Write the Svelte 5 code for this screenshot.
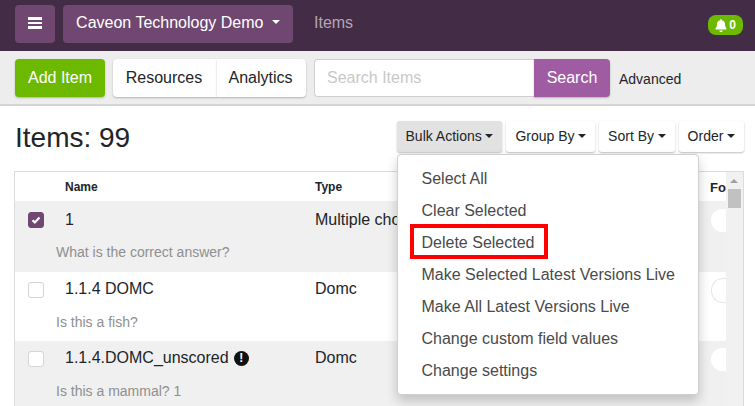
<script>
  let items = [
    { name: "1", type: "Multiple choice", stem: "What is the correct answer?", checked: true },
    { name: "1.1.4 DOMC", type: "Domc", stem: "Is this a fish?", outline: true },
    { name: "1.1.4.DOMC_unscored", type: "Domc", stem: "Is this a mammal? 1", warn: true }
  ];

  let menu = [
    "Select All",
    "Clear Selected",
    "Delete Selected",
    "Make Selected Latest Versions Live",
    "Make All Latest Versions Live",
    "Change custom field values",
    "Change settings"
  ];
</script>

<div class="page">
  <header class="topbar">
    <button class="btn-purple burger" aria-label="Menu">
      <span></span><span></span><span></span>
    </button>
    <button class="btn-purple org">Caveon Technology Demo <i class="caret big"></i></button>
    <span class="crumb">Items</span>
    <span class="bell">
      <svg width="12" height="13" viewBox="0 0 448 512"><path fill="#fff" d="M224 512c35 0 64-29 64-64H160c0 35 29 64 64 64zm215-150c-19-21-55-52-55-154 0-78-54-140-128-155V32a32 32 0 1 0-64 0v21C118 68 64 130 64 208c0 102-36 133-55 154-6 6-9 14-9 22 0 16 13 32 32 32h384c19 0 32-16 32-32 0-8-3-16-9-22z"/></svg>
      0
    </span>
  </header>

  <div class="toolbar">
    <button class="add">Add Item</button>
    <div class="pair">
      <button class="white">Resources</button>
      <button class="white">Analytics</button>
    </div>
    <div class="search">
      <input placeholder="Search Items" />
      <button>Search</button>
    </div>
    <span class="advanced">Advanced</span>
  </div>

  <div class="heading">
    <h1>Items: 99</h1>
    <div class="actions">
      <div class="bulk">
        <button class="small active">Bulk Actions<i class="caret"></i></button>
        <ul class="menu">
          {#each menu as m}
            <li class:flagged={m === "Delete Selected"}><span>{m}</span></li>
          {/each}
        </ul>
      </div>
      <button class="small">Group By<i class="caret"></i></button>
      <button class="small">Sort By<i class="caret"></i></button>
      <button class="small">Order<i class="caret"></i></button>
    </div>
  </div>

  <div class="table">
    <div class="rows">
      <div class="row head">
        <span class="c-name">Name</span>
        <span class="c-type">Type</span>
        <span class="c-fo">Fo</span>
      </div>
      {#each items as item, i}
        <div class="item" class:odd={i % 2 === 0} class:first={i === 0}>
          <div class="row main">
            <span class="check" class:on={item.checked}>
              {#if item.checked}
                <svg width="10" height="8" viewBox="0 0 10 8"><path d="M1.5 4.2 3.8 6.4 8.5 1.6" fill="none" stroke="#fff" stroke-width="2.2"/></svg>
              {/if}
            </span>
            <span class="c-name">{item.name}{#if item.warn}<span class="warn">!</span>{/if}</span>
            <span class="c-type">{item.type}</span>
            <span class="toggle" class:outline={item.outline}></span>
          </div>
          <div class="stem">{item.stem}</div>
        </div>
      {/each}
    </div>
    <div class="scrollbar">
      <span class="arrow"></span>
      <span class="thumb"></span>
    </div>
  </div>
</div>

<style>
  :global(body) {
    margin: 0;
    background: #fff;
    overflow: hidden;
  }
  .page {
    width: 755px;
    height: 406px;
    overflow: hidden;
    font-family: "Liberation Sans", Arial, sans-serif;
    color: #212529;
  }
  button {
    font-family: inherit;
    border: 0;
    cursor: pointer;
  }

  .topbar {
    height: 51px;
    background: #432c45;
    display: flex;
    align-items: flex-start;
    padding: 5px 15px 0;
    box-sizing: border-box;
  }
  .btn-purple {
    height: 38px;
    background: #6f4770;
    color: #fff;
    border-radius: 4px;
    font-size: 16px;
    padding: 0 0 2px;
  }
  .burger {
    width: 40px;
    margin-right: 8px;
    display: flex;
    flex-direction: column;
    align-items: center;
    justify-content: center;
    gap: 2px;
  }
  .burger span {
    width: 14px;
    height: 2.5px;
    background: #fff;
  }
  .org {
    width: 230px;
    margin-right: 21px;
  }
  .crumb {
    color: #b3a6b4;
    font-size: 16px;
    line-height: 36px;
  }
  .bell {
    margin-left: auto;
    margin-right: -3px;
    margin-top: 10px;
    background: #6cb900;
    color: #fff;
    font-size: 12px;
    font-weight: 700;
    height: 20px;
    width: 35px;
    border-radius: 8px;
    display: flex;
    align-items: center;
    justify-content: center;
    gap: 2px;
  }
  .caret {
    display: inline-block;
    border-top: 4px solid currentColor;
    border-left: 4px solid transparent;
    border-right: 4px solid transparent;
    margin-left: 3.6px;
    vertical-align: 3px;
  }
  .caret.big {
    margin-left: 4px;
    vertical-align: 4px;
  }

  .toolbar {
    height: 55px;
    box-sizing: border-box;
    background: #ededed;
    border-bottom: 2px solid #d5d5d5;
    padding: 8px 15px 0;
    display: flex;
    align-items: flex-start;
  }
  .add {
    width: 90px;
    height: 38px;
    background: #6cb900;
    color: #fff;
    font-size: 16px;
    border-radius: 4px;
    box-shadow: 0 1px 2px rgba(0, 0, 0, 0.25);
    margin-right: 8px;
  }
  .pair {
    display: flex;
    margin-right: 8px;
  }
  .white {
    height: 38px;
    background: #fff;
    color: #212529;
    font-size: 16px;
    border-radius: 4px;
    box-shadow: 0 1px 2px rgba(0, 0, 0, 0.25);
    padding: 0 2px 0 0;
  }
  .pair .white:first-child {
    width: 104px;
    border-radius: 4px 0 0 4px;
  }
  .pair .white:last-child {
    width: 89px;
    border-radius: 0 4px 4px 0;
  }
  .search {
    display: flex;
    width: 316px;
  }
  .search input {
    width: 220px;
    height: 38px;
    box-sizing: border-box;
    border: 1px solid #cfcfcf;
    border-right: 0;
    border-radius: 4px 0 0 4px;
    padding: 0 12px;
    font: 16px "Liberation Sans", Arial, sans-serif;
    outline: none;
  }
  .search input::placeholder {
    color: #c9c9c9;
    opacity: 1;
  }
  .search button {
    width: 76px;
    height: 38px;
    background: #a05ca2;
    color: #fff;
    font-size: 16px;
    border-radius: 0 4px 4px 0;
    box-shadow: 0 1px 2px rgba(0, 0, 0, 0.25);
  }
  .advanced {
    font-size: 14px;
    margin-left: -11px;
    line-height: 40px;
  }

  .heading {
    height: 65px;
    box-sizing: border-box;
    padding: 0 11px 0 15px;
    display: flex;
    justify-content: space-between;
    align-items: flex-start;
  }
  h1 {
    margin: 13px 0 0;
    font-size: 28px;
    font-weight: 400;
    line-height: 38px;
  }
  .actions {
    display: flex;
    gap: 4px;
    margin-top: 15px;
  }
  .bulk {
    position: relative;
  }
  .small {
    height: 31px;
    padding: 0 9px 2px;
    background: #fff;
    color: #212529;
    font-size: 14px;
    border-radius: 3px;
    box-shadow: 0 1px 2px rgba(0, 0, 0, 0.25);
    white-space: nowrap;
  }
  .small.active {
    background: #e2e2e2;
  }
  .menu {
    position: absolute;
    z-index: 5;
    top: 33px;
    left: 0;
    width: 302px;
    height: 241px;
    box-sizing: border-box;
    margin: 0;
    padding: 8px 0;
    list-style: none;
    background: #fff;
    border: 1px solid #d0d0d0;
    border-radius: 4px;
    box-shadow: 0 6px 12px rgba(0, 0, 0, 0.2);
    font-size: 16px;
    color: #4a4a4a;
  }
  .menu li {
    height: 32px;
    line-height: 32px;
    padding-left: 24px;
    white-space: nowrap;
  }
  .menu li.flagged span {
    outline: 4px solid #ff0000;
    display: inline-block;
    height: 27px;
    line-height: 29px;
    padding: 0 10px 0 8px;
    margin-left: -8px;
    margin-top: 1px;
    vertical-align: top;
  }

  .table {
    margin: 0 11px 0 14px;
    border: 1px solid #dcdcdc;
    border-bottom: 0;
    display: flex;
    height: 300px;
  }
  .rows {
    flex: 1;
    min-width: 0;
  }
  .row {
    display: flex;
    align-items: flex-start;
    position: relative;
  }
  .head {
    height: 29px;
    font-size: 12px;
    font-weight: 700;
    line-height: 31px;
  }
  .c-name {
    margin-left: 50px;
    width: 250px;
    flex: none;
  }
  .c-type {
    width: 395px;
    flex: none;
    white-space: nowrap;
  }
  .c-fo {
    font-size: 13px;
  }
  .item {
    height: 69px;
    box-sizing: border-box;
    font-size: 16px;
  }
  .item.first {
    height: 71px;
    padding-top: 1px;
  }
  .item.first .main {
    padding-top: 8px;
  }
  .item.first .stem {
    margin-top: 12px;
  }
  .item.odd {
    background: #f0f0f0;
  }
  .main {
    padding-top: 7px;
    line-height: 20px;
  }
  .check {
    position: absolute;
    left: 13px;
    top: 10px;
    width: 16px;
    height: 16px;
    box-sizing: border-box;
    background: #fff;
    border: 1px solid #d5d5d5;
    border-radius: 3px;
    display: flex;
    align-items: center;
    justify-content: center;
  }
  .check.on {
    background: #6f4770;
    border-color: #6f4770;
  }
  .warn {
    display: inline-flex;
    align-items: center;
    justify-content: center;
    width: 15px;
    height: 15px;
    margin-left: 5px;
    border-radius: 50%;
    background: #111;
    color: #fff;
    font-size: 12px;
    font-weight: 700;
    vertical-align: 1px;
  }
  .toggle {
    position: absolute;
    left: 696px;
    top: 7px;
    width: 30px;
    height: 23px;
    background: #fff;
    border-radius: 12px 0 0 12px;
  }
  .toggle.outline {
    top: 6px;
    height: 25px;
    border: 1px solid #e6e6e6;
    border-right: 0;
    box-sizing: border-box;
  }
  .stem {
    font-size: 14px;
    color: #8f8f8f;
    padding-left: 41px;
    margin-top: 13px;
    line-height: 20px;
  }
  .scrollbar {
    width: 17px;
    flex: none;
    background: #f1f1f1;
    position: relative;
  }
  .arrow {
    position: absolute;
    top: 7px;
    left: 4px;
    border-bottom: 4px solid #a0a0a0;
    border-left: 4px solid transparent;
    border-right: 4px solid transparent;
  }
  .thumb {
    position: absolute;
    top: 17px;
    left: 2px;
    width: 13px;
    height: 19px;
    background: #c1c1c1;
  }
</style>
